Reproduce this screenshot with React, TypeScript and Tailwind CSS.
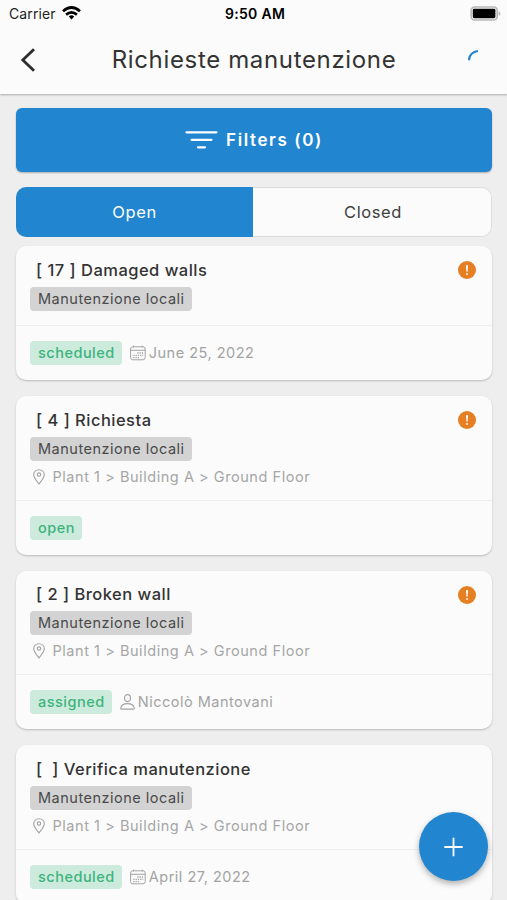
import type { ReactNode } from 'react';

type Request = {
  code: string;
  title: string;
  category: string;
  location?: string;
  status: string;
  date?: string;
  assignee?: string;
  urgent?: boolean;
};

const category = 'Manutenzione locali';
const location = 'Plant 1 > Building A > Ground Floor';

const requests: Request[] = [
  { code: '[ 17 ]', title: 'Damaged walls', category, status: 'scheduled', date: 'June 25, 2022', urgent: true },
  { code: '[ 4 ]', title: 'Richiesta', category, location, status: 'open', urgent: true },
  { code: '[ 2 ]', title: 'Broken wall', category, location, status: 'assigned', assignee: 'Niccolò Mantovani', urgent: true },
  { code: '[  ]', title: 'Verifica manutenzione', category, location, status: 'scheduled', date: 'April 27, 2022' },
];

function WifiIcon() {
  return (
    <svg width="19" height="14" viewBox="0 0 19 14" fill="none" stroke="#000" strokeWidth="2.7">
      <path d="M1 5.2Q9.5 -2.2 18 5.2" />
      <path d="M4.1 8.6Q9.5 4 14.9 8.6" />
      <path d="M6.8 10.4Q9.5 8.2 12.2 10.4L9.5 13.4Z" fill="#000" stroke="none" />
    </svg>
  );
}

function BatteryIcon() {
  return (
    <svg width="31" height="15" viewBox="0 0 31 15" fill="none">
      <rect x="1.2" y="1" width="26" height="13" rx="3.4" stroke="#b8b8b8" strokeWidth="1.7" />
      <rect x="2.8" y="2.8" width="22.6" height="9.4" rx="1.4" fill="#000" />
      <path d="M28.6 5.2v4.6c1.2-.4 1.8-1.3 1.8-2.3S29.8 5.6 28.6 5.2Z" fill="#b8b8b8" />
    </svg>
  );
}

function CalendarIcon() {
  return (
    <svg width="16" height="16" viewBox="0 0 16 16" fill="none" stroke="#a3a3a3">
      <rect x="0.6" y="1.8" width="14.6" height="13" rx="2.2" />
      <path d="M0.6 5.3h14.6M3.5 0.6v1.8M12.3 0.6v1.8" />
      <path d="M7.2 8h6M3.2 10.3h10M3.2 12.6h6.5" strokeWidth="1.3" strokeDasharray="1.3 1" />
    </svg>
  );
}

function PinIcon() {
  return (
    <svg width="12" height="16" viewBox="0 0 12 16" fill="none" stroke="#a3a3a3" strokeWidth="1.1">
      <path d="M6 15C4.7 13.2 0.7 9 0.7 5.8C0.7 2.8 3 0.7 6 0.7S11.3 2.8 11.3 5.8C11.3 9 7.3 13.2 6 15Z" />
      <circle cx="6" cy="5.6" r="1.7" />
    </svg>
  );
}

function PersonIcon() {
  return (
    <svg width="15" height="16" viewBox="0 0 15 16" fill="none" stroke="#a3a3a3" strokeWidth="1.1">
      <ellipse cx="7.5" cy="4.1" rx="3" ry="3.5" />
      <path d="M7.5 9.6C4 9.6 1.2 11.3 0.7 14C0.6 14.6 0.9 15.1 1.5 15.1H13.5C14.1 15.1 14.4 14.6 14.3 14C13.8 11.3 11 9.6 7.5 9.6Z" />
    </svg>
  );
}

function AlertIcon() {
  return (
    <svg width="18" height="18" viewBox="0 0 18 18">
      <circle cx="9" cy="9" r="9" fill="#e67e22" />
      <path d="M8 4.8C8 3.6 10 3.6 10 4.8L9.6 10.3C9.5 11 8.5 11 8.4 10.3Z" fill="#fff" />
      <circle cx="9" cy="13" r="0.9" fill="#fff" />
    </svg>
  );
}

function Tag({ tone, children }: { tone: 'gray' | 'green'; children: ReactNode }) {
  const color = tone === 'gray' ? 'bg-[#d3d3d3] text-[#4a4a4a]' : 'bg-[#cdebdd] text-[#3cb37c] font-medium';
  return (
    <span className={`flex h-[24px] w-fit items-center rounded-[4px] pl-[8px] pr-[7.5px] text-[14.5px] tracking-[0.5px] ${color}`}>
      {children}
    </span>
  );
}

function Card({ item }: { item: Request }) {
  return (
    <article className="shrink-0 rounded-[10px] bg-[#fbfbfb] shadow-[0_1px_2px_rgba(0,0,0,0.22)]">
      <div className={`border-b border-[#eeeeee] px-[14px] pt-[12px] ${item.location ? 'h-[104.5px]' : 'h-[80.25px]'}`}>
        <div className="flex h-[24px] items-center justify-between pl-[6px] pr-[2px]">
          <h2 className="whitespace-pre text-[16.5px] font-medium tracking-[0.48px] text-[#333333]">{item.code} {item.title}</h2>
          {item.urgent && <AlertIcon />}
        </div>
        <div className="pt-[4.5px]"><Tag tone="gray">{item.category}</Tag></div>
        {item.location && (
          <div className="flex h-[32px] items-center gap-[7.5px] pl-[3px] text-[14.5px] tracking-[0.55px] text-[#a6a6a6]">
            <PinIcon />
            <span>{item.location}</span>
          </div>
        )}
      </div>
      <div className="flex h-[54px] items-center px-[14px] text-[14.5px] tracking-[0.5px] text-[#a3a3a3]">
        <Tag tone="green">{item.status}</Tag>
        {item.date && <div className="ml-[7.5px] flex items-center gap-[3px]"><CalendarIcon /><span>{item.date}</span></div>}
        {item.assignee && <div className="ml-[7.5px] flex items-center gap-[3px]"><PersonIcon /><span>{item.assignee}</span></div>}
      </div>
    </article>
  );
}

export default function App() {
  return (
    <div className="relative flex h-[900px] w-[507px] flex-col overflow-hidden bg-[#eeeeee] font-['Inter',sans-serif]">
      <header className="h-[94px] shrink-0 bg-[#fbfbfb] shadow-[0_1px_2px_rgba(0,0,0,0.28)]">
        <div className="grid h-[26px] grid-cols-3 items-center pl-[9px] pr-[6px] text-[14px] text-black">
          <div className="flex items-center gap-[6px]"><span className="tracking-[0.1px] text-[#222222]">Carrier</span><WifiIcon /></div>
          <span className="text-center font-semibold tracking-[0.3px]">9:50 AM</span>
          <div className="flex justify-end"><BatteryIcon /></div>
        </div>
        <div className="flex h-[67px] items-center justify-between pl-[20px] pr-[15px]">
          <svg width="20" height="24" viewBox="0 0 20 24" fill="none" stroke="#2d2d2d" strokeWidth="2.8"><path d="M14 1.2L2.8 12L14 22.8" /></svg>
          <h1 className="text-[24px] tracking-[0.65px] text-[#333333]">Richieste manutenzione</h1>
          <svg width="24" height="24" viewBox="0 0 24 24" fill="none" stroke="#2185d0" strokeWidth="2.2"><path d="M1 12.2C1.3 7.500 4.500 3.800 10 3" /></svg>
        </div>
      </header>
      <main className="flex flex-col pl-[16px] pr-[15px] pt-[14px]">
        <button className="flex h-[64px] shrink-0 items-center justify-center gap-[8px] rounded-[6px] bg-[#2185d0] text-[17px] font-semibold tracking-[1.6px] text-white shadow-[0_1px_2px_rgba(0,0,0,0.28)]">
          <svg width="33" height="20" viewBox="0 0 33 20" stroke="#fff" strokeWidth="2.2" strokeLinecap="round"><path d="M1.5 2.3h30M6.5 9.8h20M13 17.3h7" /></svg>
          <span className="pt-px">Filters (0)</span>
        </button>
        <div className="mt-[15px] grid h-[50px] shrink-0 grid-cols-[237px_1fr] overflow-hidden rounded-[10px] text-[16.5px] tracking-[0.6px]">
          <button className="bg-[#2185d0] text-white">Open</button>
          <button className="rounded-r-[10px] border border-l-0 border-[#dcdcdc] bg-[#fbfbfb] pl-[2px] text-[#404040]">Closed</button>
        </div>
        <div className="mt-[9px] flex flex-col gap-[16px]">
          {requests.map((item) => <Card key={item.code} item={item} />)}
        </div>
      </main>
      <button aria-label="Add request" className="absolute left-[419px] top-[812px] flex size-[69px] items-center justify-center rounded-full bg-[#2185d0] shadow-[0_3px_6px_rgba(0,0,0,0.3)]">
        <svg width="20" height="20" viewBox="0 0 20 20" stroke="#fff" strokeWidth="1.8"><path d="M9.5 0.8v18.4M0.3 10h18.4" /></svg>
      </button>
    </div>
  );
}
